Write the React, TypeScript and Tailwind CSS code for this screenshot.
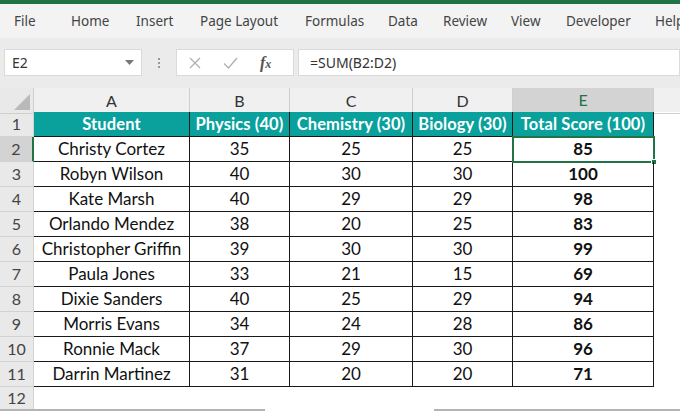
import React from 'react';

const tabs: [string, string][] = [
    ['File', 'w-[57px]'],
    ['Home', 'w-[65px]'],
    ['Insert', 'w-[64px]'],
    ['Page Layout', 'w-[105px]'],
    ['Formulas', 'w-[83px]'],
    ['Data', 'w-[55px]'],
    ['Review', 'w-[68px]'],
    ['View', 'w-[55px]'],
    ['Developer', 'w-[89px]'],
    ['Help', 'w-[40px]'],
];

const rows: [string, number, number, number, number][] = [
    ['Christy Cortez', 35, 25, 25, 85],
    ['Robyn Wilson', 40, 30, 30, 100],
    ['Kate Marsh', 40, 29, 29, 98],
    ['Orlando Mendez', 38, 20, 25, 83],
    ['Christopher Griffin', 39, 30, 30, 99],
    ['Paula Jones', 33, 21, 15, 69],
    ['Dixie Sanders', 40, 25, 29, 94],
    ['Morris Evans', 34, 24, 28, 86],
    ['Ronnie Mack', 37, 29, 30, 96],
    ['Darrin Martinez', 31, 20, 20, 71],
];

const cols = 'grid grid-cols-[34px_156px_100px_123px_100px_141px_26px]';
const cell = 'h-[25px] flex items-center justify-center border-r border-b border-[#1a1a1a]';

export default function App() {
    return (
        <div className="w-[680px] h-[411px] overflow-hidden bg-white flex flex-col font-['Lato',sans-serif]">
            {/* title strip */}
            <div className="h-[4px] bg-[#217346] shrink-0" />

            {/* ribbon tabs */}
            <div className="h-[34px] bg-[#f3f3f3] flex items-center pl-[14px] text-[13.5px] text-[#444] font-['Noto_Sans',sans-serif] shadow-[0_1px_2px_rgba(0,0,0,0.12)] shrink-0 whitespace-nowrap overflow-hidden">
                {tabs.map(([t, w]) => (
                    <div key={t} className={`${w} shrink-0`}>{t}</div>
                ))}
            </div>

            {/* formula bar */}
            <div className="h-[50px] bg-[#ebebeb] flex items-start pt-[11px] pl-[4px] shrink-0 font-['Noto_Sans',sans-serif]">
                <div className="w-[138px] h-[27px] bg-white border border-[#dadada] flex items-center justify-between px-[7px] text-[14px] text-[#333]">
                    <span>E2</span>
                    <svg width="9" height="5" viewBox="0 0 9 5"><path d="M0 0h9L4.5 5z" fill="#777" /></svg>
                </div>
                <div className="w-[34px] h-[27px] flex flex-col items-center justify-center gap-[2px]">
                    <span className="w-[2px] h-[2px] bg-[#999]" />
                    <span className="w-[2px] h-[2px] bg-[#999]" />
                    <span className="w-[2px] h-[2px] bg-[#999]" />
                </div>
                <div className="w-[118px] h-[27px] bg-white border border-[#dadada] flex items-center pl-[12px] gap-[22px]">
                    <svg width="12" height="12" viewBox="0 0 12 12"><path d="M1 1l10 10M11 1L1 11" stroke="#b0b0b0" strokeWidth="1.3" /></svg>
                    <svg width="15" height="12" viewBox="0 0 15 12"><path d="M1 6.5l4.5 4.5L14 1" stroke="#b0b0b0" strokeWidth="1.3" fill="none" /></svg>
                    <span className="font-['Liberation_Serif',serif] italic font-bold text-[16px] text-[#555] leading-none">f<span className="text-[12px]">x</span></span>
                </div>
                <div className="ml-[4px] flex-1 h-[27px] bg-white border border-[#dadada] flex items-center pl-[11px] text-[14px] text-[#333]">
                    =SUM(B2:D2)
                </div>
            </div>

            {/* column headings */}
            <div className={`${cols} h-[24px] bg-[#f0f0f0] text-[16px] text-[#333] shrink-0`}>
                <div className="relative border-r border-b border-[#cfcfcf] bg-[#e9e9e9]">
                    <svg className="absolute right-[3px] bottom-[3px]" width="16" height="16" viewBox="0 0 16 16"><path d="M16 0V16H0z" fill="#b9b9b9" /></svg>
                </div>
                {['A', 'B', 'C', 'D'].map((c) => (
                    <div key={c} className="flex items-center justify-center border-r border-b border-[#cfcfcf]">{c}</div>
                ))}
                <div className="flex items-center justify-center bg-[#d3d3d3] text-[#217346] border-r border-[#cfcfcf] border-b-2 border-b-[#217346]">E</div>
                <div className="border-b border-[#cfcfcf]" />
            </div>

            {/* sheet */}
            <div className={`${cols} text-[17px] text-[#111]`}>
                {/* row 1 */}
                <div className="h-[25px] flex items-center justify-center bg-[#e9e9e9] border-r border-b border-[#d2d2d2] text-[#444] text-[16px]">1</div>
                {['Student', 'Physics (40)', 'Chemistry (30)', 'Biology (30)', 'Total Score (100)'].map((h) => (
                    <div key={h} className={`${cell} bg-[#0aa19d] text-white font-bold whitespace-nowrap text-[16.5px] tracking-[0.1px]`}>{h}</div>
                ))}
                <div className="h-[25px]" />

                {rows.map(([name, p, c, b, t], i) => {
                    const sel = i === 0;
                    return (
                        <React.Fragment key={name}>
                            <div className={`h-[25px] flex items-center justify-center border-b border-[#d2d2d2] text-[#444] text-[16px] ${sel ? 'bg-[#d3d3d3] border-r-2 border-r-[#217346]' : 'bg-[#e9e9e9] border-r border-r-[#d2d2d2]'}`}>
                                {i + 2}
                            </div>
                            <div className={`${cell} whitespace-nowrap`}>{name}</div>
                            <div className={cell}>{p}</div>
                            <div className={cell}>{c}</div>
                            <div className={cell}>{b}</div>
                            <div className={`${cell} font-bold relative`}>
                                {t}
                                {sel && (
                                    <>
                                        <div className="absolute left-[-1px] top-[-1px] right-[-2px] bottom-[-2px] border-2 border-[#217346]" />
                                        <div className="absolute right-[-4px] bottom-[-4px] w-[6px] h-[6px] bg-[#217346] border border-white" />
                                    </>
                                )}
                            </div>
                            <div className="h-[25px]" />
                        </React.Fragment>
                    );
                })}

                {/* row 12 */}
                <div className="h-[22px] flex items-center justify-center bg-[#e9e9e9] border-r border-[#d2d2d2] text-[#444] text-[16px]">12</div>
                <div className="col-span-6 h-[22px]" />
            </div>

            {/* bottom edge */}
            <div className="flex h-[2px]">
                <div className="w-[265px] bg-[#b4b4b4]" />
                <div className="w-[169px]" />
                <div className="flex-1 bg-[#b4b4b4]" />
            </div>
        </div>
    );
}
